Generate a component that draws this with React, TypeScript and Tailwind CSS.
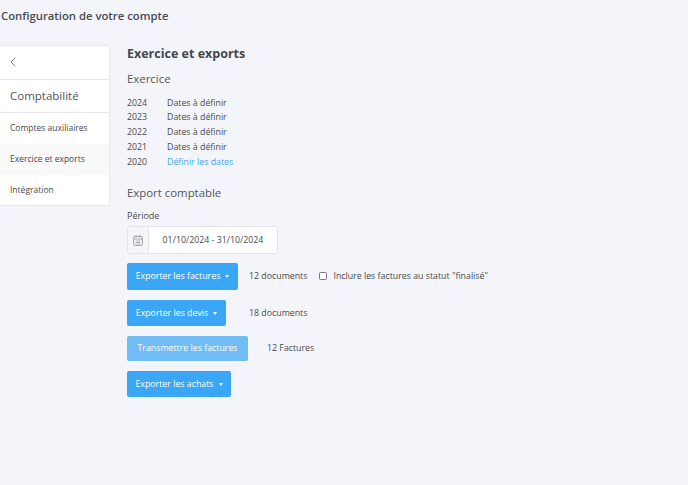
import { ChevronLeft } from "lucide-react";

const years = [
  { year: "2024", label: "Dates à définir" },
  { year: "2023", label: "Dates à définir" },
  { year: "2022", label: "Dates à définir" },
  { year: "2021", label: "Dates à définir" },
  { year: "2020", label: "Définir les dates", link: true },
];

function Caret() {
  return <span className="ml-[5px] inline-block h-0 w-0 border-x-[2.5px] border-t-[3px] border-x-transparent border-t-white align-middle" />;
}

function Calendar() {
  return (
    <svg width="10" height="11" viewBox="0 0 10 11" fill="none" stroke="#a8a8a8" strokeWidth="1">
      <rect x="0.5" y="1.5" width="9" height="9" rx="1.5" />
      <path d="M0.5 4h9M3 0v2.5M7 0v2.5" />
      <path d="M2.5 6h5M2.5 7.5h5M2.5 9h5" strokeWidth="0.8" />
    </svg>
  );
}

export default function App() {
  return (
    <div className="h-[485px] w-[688px] overflow-hidden bg-[#f4f5fa] font-['Open_Sans',sans-serif] text-[#4a4a4a]">
      <h1 className="h-[45px] pl-[1px] pt-[8px] text-[11.3px] leading-[16px] font-semibold text-[#484b52]">Configuration de votre compte</h1>
      <div className="flex items-start">
        <aside className="mr-[17px] w-[110px] rounded-r-[2px] border border-l-0 border-[#e8e8ea] bg-white">
          <div className="flex h-[34px] items-center border-b border-[#e8e8ea] pb-[2px] pl-[5px]">
            <ChevronLeft size={16} strokeWidth={1} className="text-[#444]" />
          </div>
          <div className="flex h-[33px] items-center border-b border-[#e8e8ea] pl-[10px] text-[11.5px] text-[#555]">Comptabilité</div>
          <div className="flex h-[31px] items-center pl-[10px] text-[8.5px]">Comptes auxiliaires</div>
          <div className="flex h-[31px] items-center bg-[#f9f9f9] pl-[10px] text-[8.5px]">Exercice et exports</div>
          <div className="flex h-[30px] items-center pl-[10px] text-[8.5px]">Intégration</div>
        </aside>
        <main className="w-[440px]">
          <h2 className="text-[12.5px] leading-[17px] font-bold text-[#44464c]">Exercice et exports</h2>
          <h3 className="mt-[8px] text-[11.4px] leading-[17px] text-[#555]">Exercice</h3>
          <div className="mt-[9px]">
            {years.map((y) => (
              <div key={y.year} className="flex h-[14.7px] items-center text-[8.8px]">
                <span className="w-[40px]">{y.year}</span>
                <span className={y.link ? "text-[#3fa4f4]" : ""}>{y.label}</span>
              </div>
            ))}
          </div>
          <h3 className="mt-[15px] text-[11.4px] leading-[17px] text-[#555]">Export comptable</h3>
          <div className="mt-[8px] text-[9px] leading-[13px]">Période</div>
          <div className="mt-[4px] flex h-[28px] w-[151px] rounded-[3px] border border-[#e4e4e8] bg-white">
            <div className="flex w-[21px] items-center justify-center rounded-l-[3px] border-r border-[#e4e4e8] bg-[#f6f6f8]">
              <Calendar />
            </div>
            <div className="flex flex-1 items-center justify-center text-[8.8px]">01/10/2024 - 31/10/2024</div>
          </div>
          <div className="mt-[9px] flex items-center text-[8.8px]">
            <button className="h-[27px] w-[111px] rounded-[2px] bg-[#3ba5f6] text-white">Exporter les factures<Caret /></button>
            <span className="ml-[11px]">12 documents</span>
            <input type="checkbox" className="mb-[2px] ml-[12px] h-[8px] w-[8px] appearance-none rounded-[1.5px] border border-[#777] bg-white" />
            <span className="ml-[6px]">Inclure les factures au statut "finalisé"</span>
          </div>
          <div className="mt-[10px] flex items-center text-[8.8px]">
            <button className="h-[26px] w-[99px] rounded-[2px] bg-[#3ba5f6] text-white">Exporter les devis<Caret /></button>
            <span className="ml-[23px]">18 documents</span>
          </div>
          <div className="mt-[10px] flex items-center text-[8.8px]">
            <button className="h-[25px] w-[121px] rounded-[2px] bg-[#72bcf6] text-white">Transmettre les factures</button>
            <span className="ml-[19px]">12 Factures</span>
          </div>
          <div className="mt-[10px] flex items-center text-[8.8px]">
            <button className="h-[26px] w-[104px] rounded-[2px] bg-[#3ba5f6] text-white">Exporter les achats<Caret /></button>
          </div>
        </main>
      </div>
    </div>
  );
}
